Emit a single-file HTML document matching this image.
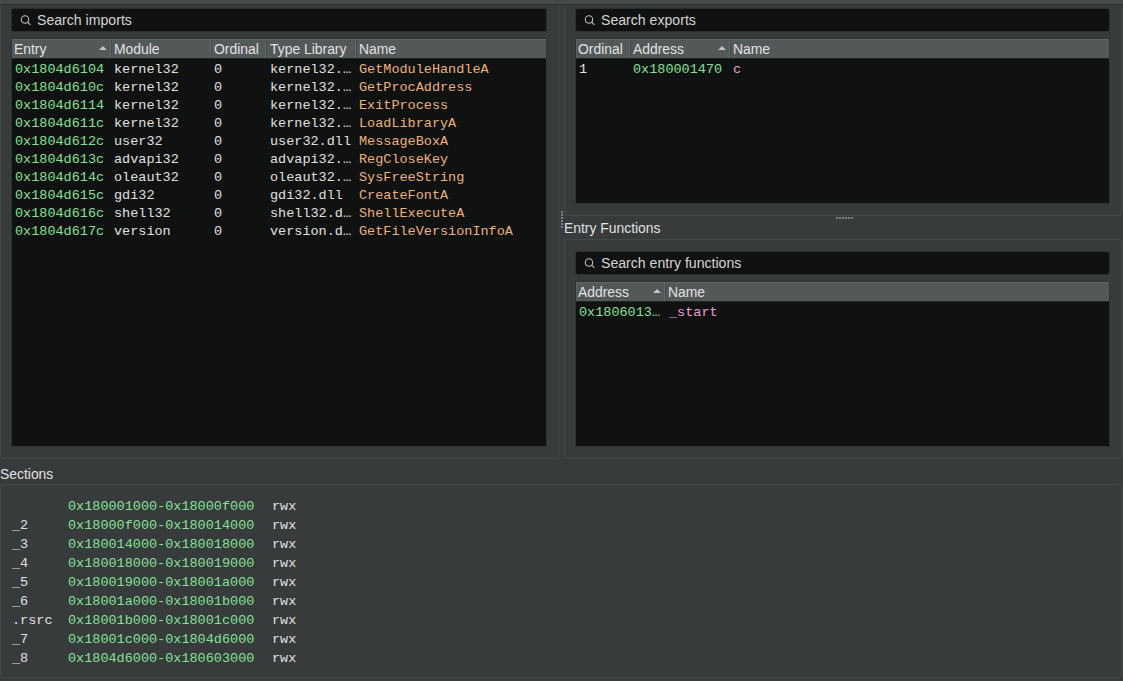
<!DOCTYPE html>
<html><head><meta charset="utf-8">
<style>
*{box-sizing:border-box;margin:0;padding:0}
html,body{width:1123px;height:681px;overflow:hidden}
body{background:#383b3c;position:relative;font-family:"Liberation Sans",sans-serif;font-size:15.5px;color:#e0e0e0}
.s{transform:scaleX(.896);transform-origin:0 0}
.search .tx.s{transform:scaleX(.91)}
.a{position:absolute}
.panel{position:absolute;border:1px solid #45494a;border-top:none;border-radius:0 0 3px 3px}
.panel.t{border-top:1px solid #45494a;border-radius:3px}
.search{position:absolute;background:#101211;border-radius:2px;box-shadow:0 0 0 1px #2c2f30}
.search .ic{position:absolute;left:0;top:0}
.search .tx{position:absolute;left:25px;top:3px;line-height:16px;color:#d4d4d4;white-space:nowrap}
.tbl{position:absolute;background:#101211;box-shadow:0 0 0 1px #303334}
.hdr{position:absolute;left:0;top:0;right:0;height:20px;background:#535859;border-top:1px solid #62676a;border-bottom:1px solid #222526;box-shadow:inset 1px 0 0 #5c6062}
.hc{position:absolute;top:1px;line-height:16px;color:#e2e2e2;white-space:nowrap}
.sep{position:absolute;top:0;width:1px;height:18px;background:#66696b;box-shadow:1px 0 0 #46494b}
.arr{position:absolute;top:6px;width:0;height:0;border-left:4px solid transparent;border-right:4px solid transparent;border-bottom:4px solid #c4c4c1}
.m{font-family:"Liberation Mono",monospace;font-size:13.5px;white-space:pre;position:absolute;line-height:18px}
.g{color:#84e096}
.o{color:#eeb078}
.w{color:#e0e0e0}
.p{color:#e89cd6}
.dot{position:absolute;width:2px;height:2px;background:#7f8283}
</style></head><body>
<!-- top strip -->
<div class="a" style="left:0;top:0;width:1123px;height:4px;background:#45494a"></div>
<div class="a" style="left:0;top:4px;width:1123px;height:1px;background:#2b2e2f"></div>

<!-- imports panel -->
<div class="panel" style="left:0;top:5px;width:559px;height:454px"></div>
<div class="search" style="left:12px;top:9px;width:534px;height:22px"><svg class="ic" width="22" height="22" viewBox="0 0 22 22"><circle cx="13" cy="10.5" r="3.7" fill="none" stroke="#c4c0bc" stroke-width="1.1"/><path d="M15.6 13.1 L18.4 15.9" stroke="#c4c0bc" stroke-width="1.1"/></svg><div class="tx s">Search imports</div></div>
<div class="tbl" style="left:12px;top:39px;width:534px;height:407px">
  <div class="hdr">
    <div class="hc s" style="left:2px">Entry</div><div class="arr" style="left:87px"></div><div class="sep" style="left:98px"></div>
    <div class="hc s" style="left:102px">Module</div><div class="sep" style="left:198px"></div>
    <div class="hc s" style="left:202px">Ordinal</div><div class="sep" style="left:253px"></div>
    <div class="hc s" style="left:258px">Type Library</div><div class="sep" style="left:343px"></div>
    <div class="hc s" style="left:347px">Name</div>
  </div>
  <div class="m g" style="left:3px;top:22px">0x1804d6104
0x1804d610c
0x1804d6114
0x1804d611c
0x1804d612c
0x1804d613c
0x1804d614c
0x1804d615c
0x1804d616c
0x1804d617c</div>
  <div class="m w" style="left:102px;top:22px">kernel32
kernel32
kernel32
kernel32
user32
advapi32
oleaut32
gdi32
shell32
version</div>
  <div class="m w" style="left:202px;top:22px">0
0
0
0
0
0
0
0
0
0</div>
  <div class="m w" style="left:258px;top:22px">kernel32.…
kernel32.…
kernel32.…
kernel32.…
user32.dll
advapi32.…
oleaut32.…
gdi32.dll
shell32.d…
version.d…</div>
  <div class="m o" style="left:347px;top:22px">GetModuleHandleA
GetProcAddress
ExitProcess
LoadLibraryA
MessageBoxA
RegCloseKey
SysFreeString
CreateFontA
ShellExecuteA
GetFileVersionInfoA</div>
</div>

<!-- vertical splitter dots -->
<div class="dot" style="left:561px;top:211px"></div>
<div class="dot" style="left:561px;top:214px"></div>
<div class="dot" style="left:561px;top:217px"></div>
<div class="dot" style="left:561px;top:220px"></div>
<div class="dot" style="left:561px;top:223px"></div>
<div class="dot" style="left:561px;top:226px"></div>

<!-- exports panel -->
<div class="panel" style="left:564px;top:5px;width:558px;height:211px"></div>
<div class="search" style="left:576px;top:9px;width:533px;height:22px"><svg class="ic" width="22" height="22" viewBox="0 0 22 22"><circle cx="13" cy="10.5" r="3.7" fill="none" stroke="#c4c0bc" stroke-width="1.1"/><path d="M15.6 13.1 L18.4 15.9" stroke="#c4c0bc" stroke-width="1.1"/></svg><div class="tx s">Search exports</div></div>
<div class="tbl" style="left:576px;top:39px;width:533px;height:164px">
  <div class="hdr">
    <div class="hc s" style="left:2px">Ordinal</div><div class="sep" style="left:53px"></div>
    <div class="hc s" style="left:57px">Address</div><div class="arr" style="left:142px"></div><div class="sep" style="left:153px"></div>
    <div class="hc s" style="left:157px">Name</div>
  </div>
  <div class="m w" style="left:3px;top:22px">1</div>
  <div class="m g" style="left:57px;top:22px">0x180001470</div>
  <div class="m p" style="left:157px;top:22px">c</div>
</div>

<!-- horizontal splitter dots -->
<div class="dot" style="left:836px;top:217px"></div>
<div class="dot" style="left:839px;top:217px"></div>
<div class="dot" style="left:842px;top:217px"></div>
<div class="dot" style="left:845px;top:217px"></div>
<div class="dot" style="left:848px;top:217px"></div>
<div class="dot" style="left:851px;top:217px"></div>

<div class="a s" style="left:564px;top:220px;line-height:16px;white-space:nowrap">Entry Functions</div>
<div class="panel t" style="left:564px;top:239px;width:558px;height:220px"></div>
<div class="search" style="left:576px;top:252px;width:533px;height:22px"><svg class="ic" width="22" height="22" viewBox="0 0 22 22"><circle cx="13" cy="10.5" r="3.7" fill="none" stroke="#c4c0bc" stroke-width="1.1"/><path d="M15.6 13.1 L18.4 15.9" stroke="#c4c0bc" stroke-width="1.1"/></svg><div class="tx s">Search entry functions</div></div>
<div class="tbl" style="left:576px;top:282px;width:533px;height:164px">
  <div class="hdr">
    <div class="hc s" style="left:2px">Address</div><div class="arr" style="left:77px"></div><div class="sep" style="left:88px"></div>
    <div class="hc s" style="left:92px">Name</div>
  </div>
  <div class="m g" style="left:3px;top:22px">0x1806013…</div>
  <div class="m p" style="left:93px;top:22px">_start</div>
</div>

<!-- sections -->
<div class="a s" style="left:0;top:466px;line-height:16px;white-space:nowrap">Sections</div>
<div class="panel t" style="left:0;top:484px;width:1122px;height:194px"></div>
<div class="m w" style="left:12px;top:497px;line-height:19px">
_2
_3
_4
_5
_6
.rsrc
_7
_8</div>
<div class="m g" style="left:68px;top:497px;line-height:19px">0x180001000-0x18000f000
0x18000f000-0x180014000
0x180014000-0x180018000
0x180018000-0x180019000
0x180019000-0x18001a000
0x18001a000-0x18001b000
0x18001b000-0x18001c000
0x18001c000-0x1804d6000
0x1804d6000-0x180603000</div>
<div class="m w" style="left:272px;top:497px;line-height:19px">rwx
rwx
rwx
rwx
rwx
rwx
rwx
rwx
rwx</div>
</body></html>
